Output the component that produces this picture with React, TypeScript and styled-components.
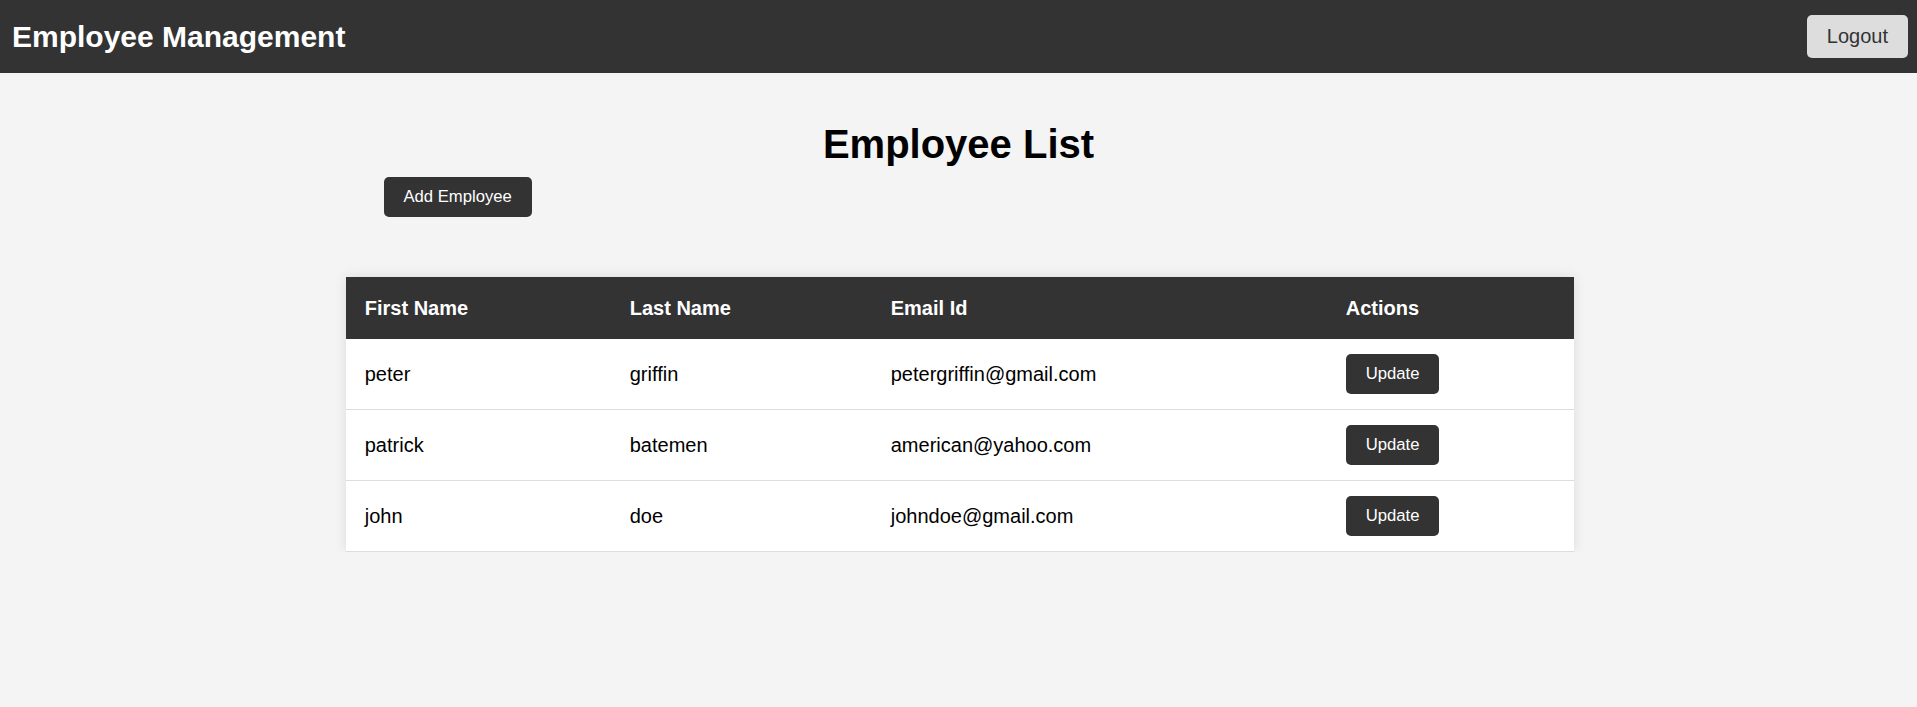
import React from "react";
import styled, { createGlobalStyle } from "styled-components";

interface IEmployee {
    id: number;
    firstName: string;
    lastName: string;
    email: string;
}

const employees: Array<IEmployee> = [
    { id: 1, firstName: "peter", lastName: "griffin", email: "petergriffin@gmail.com" },
    { id: 2, firstName: "patrick", lastName: "batemen", email: "american@yahoo.com" },
    { id: 3, firstName: "john", lastName: "doe", email: "johndoe@gmail.com" },
];

const columns = [
    { label: "First Name", width: 265 },
    { label: "Last Name", width: 261 },
    { label: "Email Id", width: 455 },
    { label: "Actions", width: 247 },
];

const GlobalStyle = createGlobalStyle`
    *, *::before, *::after {
        box-sizing: border-box;
    }
    body {
        margin: 0;
        background-color: #f4f4f4;
        font-family: "Liberation Sans", Arial, sans-serif;
        color: #000;
    }
`;

export default function App() {
    return (
        <>
            <GlobalStyle />
            <NavBar>
                <Brand>Employee Management</Brand>
                <LogoutButton type="button">Logout</LogoutButton>
            </NavBar>
            <Main>
                <PageTitle>Employee List</PageTitle>
                <Toolbar>
                    <DarkButton type="button">Add Employee</DarkButton>
                </Toolbar>
                <Table>
                    <thead>
                        <tr>
                            {columns.map((c) => (
                                <Th key={c.label} $width={c.width}>
                                    {c.label}
                                </Th>
                            ))}
                        </tr>
                    </thead>
                    <tbody>
                        {employees.map((e) => (
                            <tr key={e.id}>
                                <Td>{e.firstName}</Td>
                                <Td>{e.lastName}</Td>
                                <Td>{e.email}</Td>
                                <Td>
                                    <DarkButton type="button">Update</DarkButton>
                                </Td>
                            </tr>
                        ))}
                    </tbody>
                </Table>
            </Main>
        </>
    );
}

const NavBar = styled.header`
    height: 73px;
    background-color: #333;
    display: flex;
    align-items: center;
    justify-content: space-between;
    padding: 0 9px 0 12px;
`;

const Brand = styled.h1`
    margin: 0;
    color: #fff;
    font-size: 30px;
    font-weight: 700;
    line-height: 34px;
`;

const LogoutButton = styled.button`
    background-color: #ddd;
    color: #333;
    border: none;
    border-radius: 5px;
    padding: 10px 20px;
    font-family: inherit;
    font-size: 20px;
    line-height: 23px;
    cursor: pointer;
`;

const Main = styled.main`
    display: flex;
    flex-direction: column;
    align-items: center;
`;

const PageTitle = styled.h2`
    margin: 48px 0 10px;
    font-size: 40px;
    font-weight: 700;
    line-height: 46px;
    text-align: center;
`;

const Toolbar = styled.div`
    width: 1150px;
    display: flex;
`;

const DarkButton = styled.button`
    background-color: #333;
    color: #fff;
    border: none;
    border-radius: 5px;
    padding: 10px 20px;
    font-family: inherit;
    font-size: 16.67px;
    line-height: 20px;
    cursor: pointer;
`;

const Table = styled.table`
    width: 1228px;
    margin: 60px 0 0 3px;
    border-collapse: collapse;
    table-layout: fixed;
    background-color: #fff;
    box-shadow: 0 0 12px rgba(0, 0, 0, 0.1);
`;

const Th = styled.th<{ $width: number }>`
    width: ${(p) => p.$width}px;
    background-color: #333;
    color: #fff;
    text-align: left;
    padding: 19.5px 18.75px;
    font-size: 20px;
    font-weight: 700;
    line-height: 23px;
`;

const Td = styled.td`
    padding: 15px 18.75px;
    border-bottom: 1px solid #ddd;
    font-size: 20px;
    line-height: 23px;
    vertical-align: middle;
    color: #000;
`;
